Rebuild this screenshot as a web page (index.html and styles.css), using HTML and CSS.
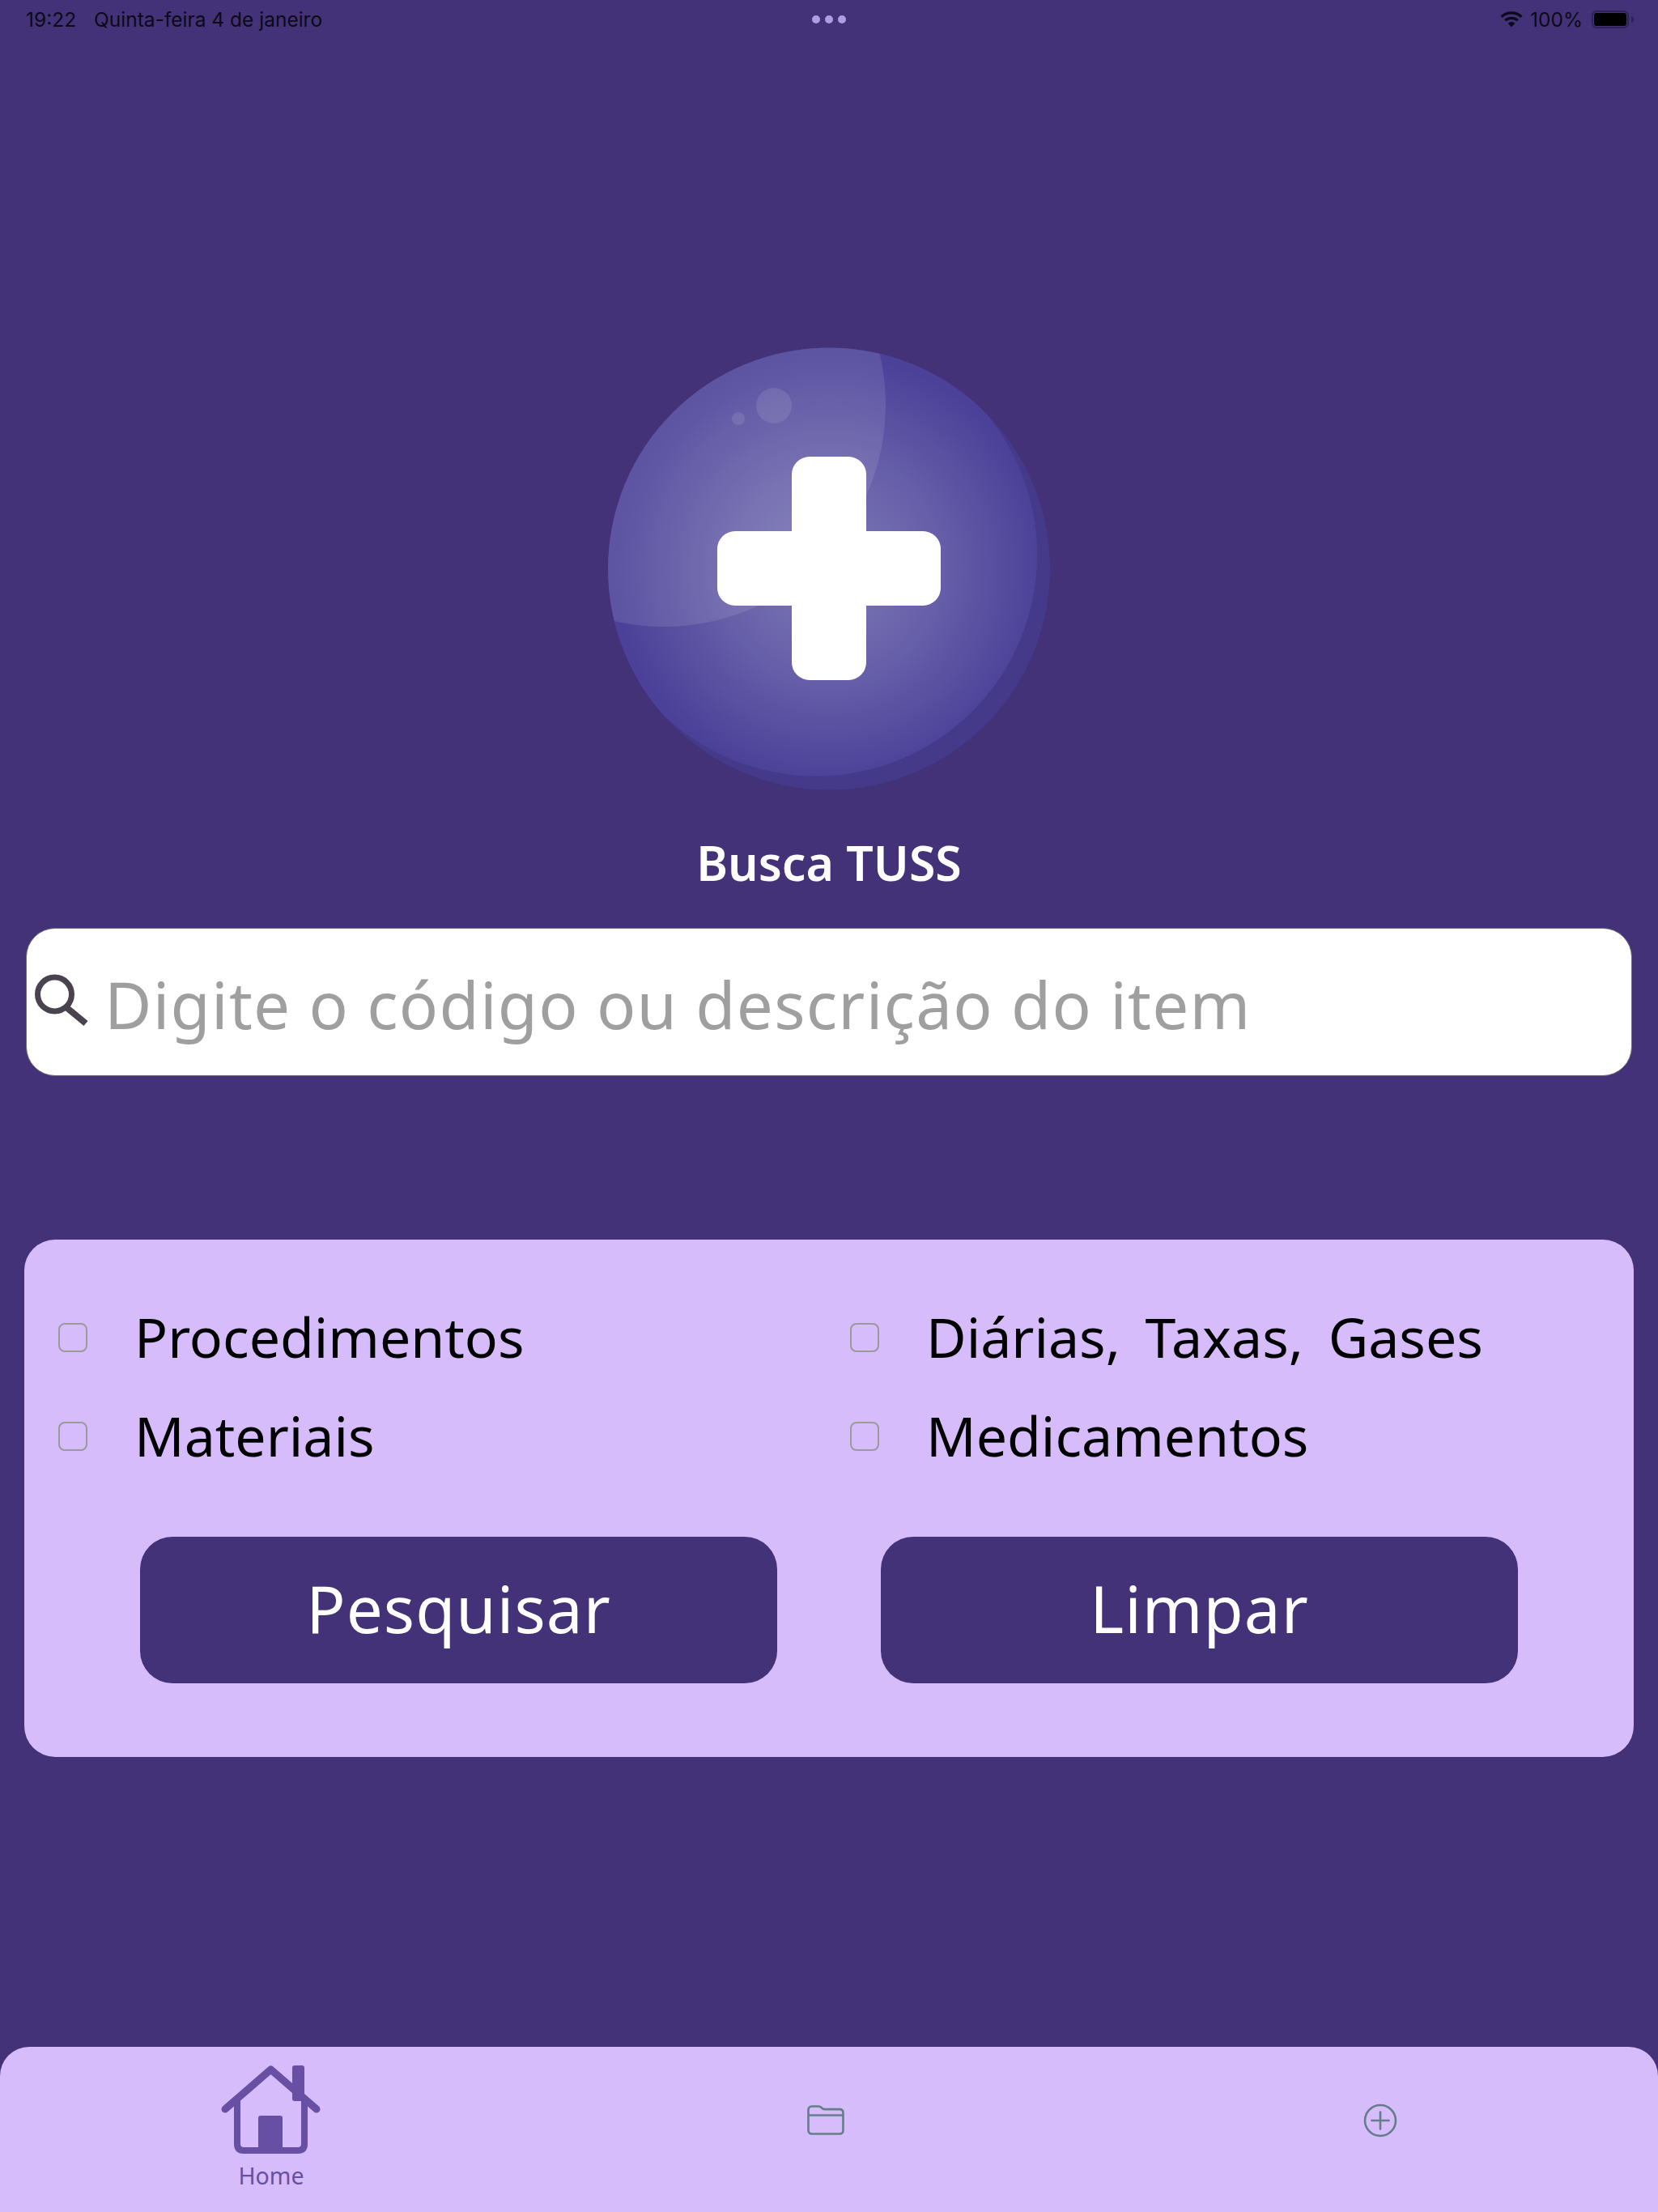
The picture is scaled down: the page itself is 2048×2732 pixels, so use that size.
FILE: index.html
```html
<!DOCTYPE html>
<html lang="pt-BR">
  <head>
    <meta charset="UTF-8" />
    <title>Busca TUSS</title>
    <link rel="stylesheet" href="styles.css">
  </head>
  <body>
    <div class="app">
      <div class="status-bar">
        <div class="status-left">
          <span>19:22</span>
          <span>Quinta-feira 4 de janeiro</span>
        </div>
        <div class="status-dots"><i></i><i></i><i></i></div>
        <div class="status-right">
          <svg class="wifi" viewBox="1.500 1 25 18" width="28" height="20">
            <path d="M14 4.2c3.9 0 7.4 1.5 10.1 4l2.1-2.2A17.7 17.7 0 0 0 14 1.2 17.7 17.7 0 0 0 1.800 6l2.100 2.200c2.700-2.500 6.200-4 10.100-4z"/>
            <path d="M14 10c2.300 0 4.400.9 6 2.300l2.100-2.200A11.900 11.900 0 0 0 14 7a11.900 11.900 0 0 0-8.100 3.100L8 12.300c1.600-1.400 3.700-2.300 6-2.300z"/>
            <path d="M14 12.800c-1.500 0-2.800.5-3.900 1.400l3.900 4.300 3.900-4.300c-1.100-.9-2.400-1.400-3.900-1.400z"/>
          </svg>
          <span>100%</span>
          <div class="battery"><div class="battery-fill"></div></div>
          <div class="battery-tip"></div>
        </div>
      </div>

      <svg class="logo" viewBox="0 0 546 547" width="546" height="547">
        <defs>
          <radialGradient id="ball" cx="273" cy="273" r="265" gradientUnits="userSpaceOnUse">
            <stop offset="0" stop-color="#7d78b6"/>
            <stop offset="0.45" stop-color="#6a63ab"/>
            <stop offset="1" stop-color="#4b4198"/>
          </radialGradient>
          <clipPath id="ball-clip"><circle cx="273" cy="273.500" r="273"/></clipPath>
        </defs>
        <circle cx="273" cy="273.500" r="273" fill="#453a8a"/>
        <circle cx="257" cy="256.500" r="273" fill="url(#ball)" clip-path="url(#ball-clip)"/>
        <circle cx="69" cy="71" r="274" fill="#fff" opacity="0.1" clip-path="url(#ball-clip)"/>
        <circle cx="205" cy="72" r="22" fill="#fff" opacity="0.1"/>
        <circle cx="161" cy="88" r="8" fill="#fff" opacity="0.1"/>
        <rect x="227" y="135" width="92" height="276" rx="22" fill="#fff"/>
        <rect x="135" y="227" width="276" height="92" rx="22" fill="#fff"/>
      </svg>

      <h1 class="title">Busca TUSS</h1>

      <div class="search">
        <svg class="search-icon" viewBox="0 0 68 68" width="68" height="68">
          <circle cx="24.500" cy="27" r="21" fill="none" stroke="#49434f" stroke-width="7"/>
          <path d="M40 44 L63 63" stroke="#49434f" stroke-width="8" fill="none"/>
        </svg>
        <span class="search-placeholder">Digite o código ou descrição do item</span>
      </div>

      <div class="filters">
        <div class="options">
          <div class="option"><span class="check"></span><span>Procedimentos</span></div>
          <div class="option"><span class="check"></span><span>Diárias, Taxas, Gases</span></div>
          <div class="option"><span class="check"></span><span>Materiais</span></div>
          <div class="option"><span class="check"></span><span>Medicamentos</span></div>
        </div>
        <div class="actions">
          <button class="btn">Pesquisar</button>
          <button class="btn">Limpar</button>
        </div>
      </div>

      <div class="tabbar">
        <div class="tab">
          <svg viewBox="0 0 130 115" width="130" height="115">
            <rect x="91" y="3" width="15" height="44" rx="3" fill="#6750a4"/>
            <path d="M23 46V100q0 8 8 8H98q8 0 8-8V46" fill="none" stroke="#6750a4" stroke-width="8"/>
            <path d="M8 57L64.500 8L121 57" fill="none" stroke="#6750a4" stroke-width="9" stroke-linecap="round" stroke-linejoin="round"/>
            <path d="M49 68q0-3 3-3H76q3 0 3 3V108H49z" fill="#6750a4"/>
          </svg>
          <span class="tab-label">Home</span>
        </div>
        <div class="tab tab-small">
          <svg class="folder" viewBox="0 0 46 37" width="46" height="37">
            <path d="M1.500 9V6q0-4.500 4.500-4.500h7.500q3 0 4.500 1.800q1.500 1.800 4 1.800H40q4.500 0 4.500 4.500V31q0 4.500-4.500 4.500H6q-4.500 0-4.500-4.500z M1.500 12.500H44.500" fill="none" stroke="#647d8b" stroke-width="2.600"/>
          </svg>
        </div>
        <div class="tab tab-small">
          <svg viewBox="0 0 42 42" width="42" height="42">
            <circle cx="21" cy="21" r="19" fill="none" stroke="#647d8b" stroke-width="2.600"/>
            <path d="M10.500 21H31.500M21 10.500V31.500" fill="none" stroke="#647d8b" stroke-width="2.600" stroke-linecap="round"/>
          </svg>
        </div>
      </div>
    </div>
  </body>
</html>
```

FILE: styles.css
```css
* {
  box-sizing: border-box;
}
body {
  margin: 0;
  background-color: #433278;
  font-family: "Noto Sans", sans-serif;
}
.app {
  width: 2048px;
  height: 2732px;
  display: flex;
  flex-direction: column;
  overflow: hidden;
}
.status-bar {
  height: 48px;
  padding: 0 30px 0 32px;
  display: flex;
  align-items: center;
  justify-content: space-between;
  font-family: Inter, sans-serif;
  font-size: 24.500px;
  color: #0b0a16;
  position: relative;
}
.status-left {
  display: flex;
  gap: 22px;
}
.status-dots {
  position: absolute;
  left: 1003px;
  top: 19px;
  display: flex;
  gap: 6px;
}
.status-dots i {
  width: 10px;
  height: 10px;
  border-radius: 50%;
  background-color: #b09ce0;
}
.status-right {
  display: flex;
  align-items: center;
}
.wifi {
  margin-right: 9px;
  fill: #0b0a16;
}
.battery {
  width: 46px;
  height: 22px;
  margin-left: 11px;
  padding: 1px;
  border: 2px solid #2d2358;
  border-radius: 6px;
}
.battery-fill {
  height: 100%;
  background-color: #000;
  border-radius: 3px;
}
.battery-tip {
  width: 3px;
  height: 8px;
  margin-left: 3px;
  background-color: #2d2358;
  border-radius: 0 3px 3px 0;
}
.logo {
  display: block;
  margin: 381px 0 0 751px;
}
.title {
  margin: 46px 0 0;
  height: 94px;
  text-align: center;
  font-size: 59px;
  line-height: 86px;
  font-weight: 600;
  color: #fff;
}
.search {
  width: 1984px;
  height: 183px;
  margin: 30px 0 0 32px;
  padding: 0 0 0 10px;
  display: flex;
  align-items: center;
  background-color: #fff;
  border: 1px solid #6f6a75;
  border-radius: 36px;
}
.search-icon {
  flex: none;
  margin-top: -6px;
}
.search-placeholder {
  margin: 4px 0 0 18px;
  font-size: 80px;
  line-height: 1;
  letter-spacing: 1.250px;
  color: #9f9f9f;
}
.filters {
  width: 1988px;
  height: 639px;
  margin: 202px 0 0 30px;
  padding: 78px 0 0 42px;
  background-color: #d6bcfa;
  border-radius: 38px;
}
.options {
  display: grid;
  grid-template-columns: 978px 1fr;
  grid-auto-rows: 122px;
}
.option {
  display: flex;
  align-items: center;
  height: 82px;
  font-size: 68px;
  word-spacing: 13px;
  color: #000;
}
.check {
  flex: none;
  width: 36px;
  height: 36px;
  margin: 4px 58px 0 0;
  border: 2px solid #9a9a9a;
  border-radius: 8px;
}
.actions {
  display: flex;
  gap: 128px;
  margin: 45px 0 0 101px;
}
.btn {
  width: 787px;
  height: 181px;
  padding: 0 0 6px;
  border: none;
  border-radius: 40px;
  background-color: #433278;
  color: #fff;
  font-family: inherit;
  font-size: 80px;
  letter-spacing: 1px;
}
.tabbar {
  height: 204px;
  margin-top: auto;
  padding: 20px 0 0 110px;
  display: grid;
  grid-template-columns: repeat(3, 450px);
  column-gap: 235px;
  background-color: #d6bcfa;
  border-radius: 36px 36px 0 0;
}
.tab {
  display: flex;
  flex-direction: column;
  align-items: center;
}
.tab-small {
  padding-top: 50px;
}
.folder {
  margin-top: 2px;
}
.tab-label {
  margin-top: 6px;
  font-size: 28.500px;
  line-height: 36px;
  color: #6750a4;
}
```
